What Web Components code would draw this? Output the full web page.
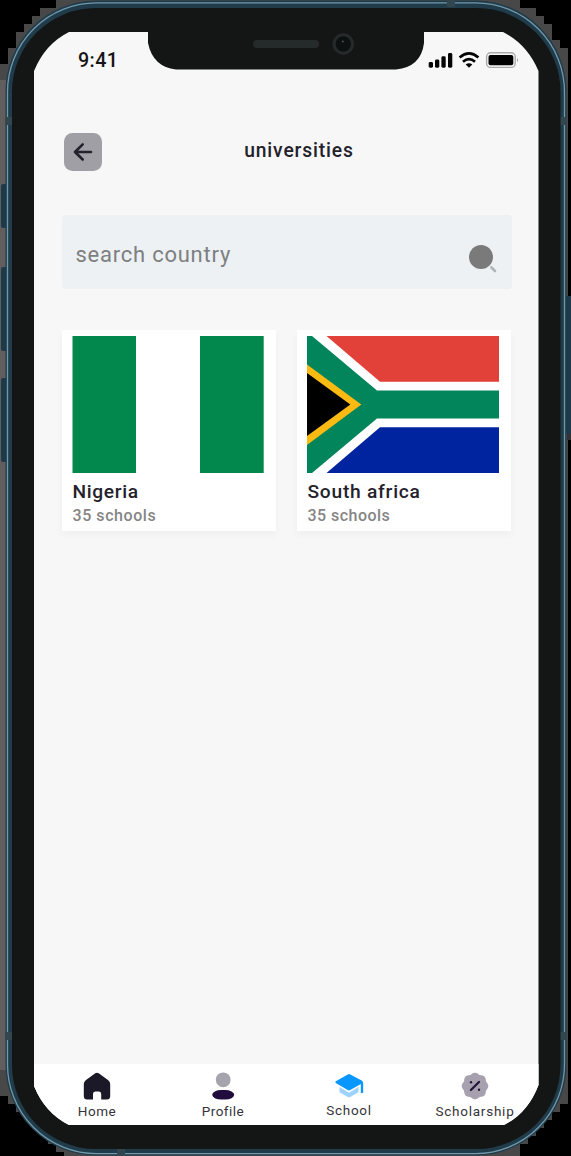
<!DOCTYPE html>
<html lang="en">
<head>
<meta charset="utf-8">
<title>universities</title>
<style>
html,body{margin:0;background:#000;overflow:hidden}
body{font-family:Roboto,"Liberation Sans",sans-serif;color:#23222b}
</style>
</head>
<body>
<phone-frame>
  <status-bar></status-bar>
  <page-header>universities</page-header>
  <search-box>search country</search-box>
  <country-grid>
    <country-card flag="ng" style="--name-spacing:.65px;--count-spacing:.57px"><span slot="name">Nigeria</span><span slot="count">35 schools</span></country-card>
    <country-card flag="za" style="--name-spacing:.75px;--count-spacing:.47px"><span slot="name">South africa</span><span slot="count">35 schools</span></country-card>
  </country-grid>
  <tab-bar>
    <tab-item icon="home" style="--ls:.55px">Home</tab-item>
    <tab-item icon="profile" style="--ls:.5px">Profile</tab-item>
    <tab-item icon="school" style="--ls:.75px;--lift:-1px">School</tab-item>
    <tab-item icon="scholarship" style="--ls:.75px">Scholarship</tab-item>
  </tab-bar>
</phone-frame>
<script>
class Base extends HTMLElement{
  connectedCallback(){
    if(this.shadowRoot)return;
    this.attachShadow({mode:'open'}).innerHTML=this.render();
  }
}
customElements.define('phone-frame',class extends Base{
  render(){return `<style>
:host{display:grid;width:571px;height:1156px;overflow:hidden}
svg,.screen{grid-area:1/1}
.screen{box-sizing:border-box;margin:32px 32px 31px 34px;width:505px;height:1093px;display:flex;flex-direction:column;background:#f7f7f7;clip-path:path("M0 39Q11 12 35 0H114V11Q119 35 142 37.5H362Q387 35 390 11V0H469Q493 12 504.5 39V1053Q494 1081 470 1093H35Q11 1081 0 1054Z")}
</style>
<svg width="571" height="1156" viewBox="0 0 571 1156">
<path fill="#484848" d="M56 0H520V8H536V16H544V24H552V40H560V48H568V1104H560V1112H552V1120H544V1128H536V1136H528V1144H520V1156H64V1152H56V1144H48V1136H40V1128H32V1120H24V1112H16V1104H8V1096H0V64H8V48H16V32H24V24H32V16H40V8H56Z"/>
<path fill="#625e5e" d="M0 80H6V1070H0Z"/>
<g fill="#1d3a4b"><rect x="1" y="184" width="8" height="44" rx="2"/><rect x="1" y="267" width="8" height="84" rx="2"/><rect x="1" y="378" width="8" height="84" rx="2"/><rect x="564" y="296" width="9" height="138" rx="1"/></g>
<path fill="#333" d="M567 434h4v6h-4z"/>
<rect x="5.5" y=".5" width="561" height="1155" rx="91" fill="#203b49"/>
<rect x="7.5" y="2.9" width="557" height="1150.7" rx="89" fill="none" stroke="#7198ab" stroke-width="1.3"/>
<path fill="#31464f" d="M5 117h7v8H5zM560 117h7v8h-7zM5 1032h7v8H5zM560 1032h7v8h-7zM447 0h8v7h-8zM117 1149h8v7h-8z"/>
<rect x="12" y="8" width="548.5" height="1141" rx="84" fill="#131615"/>
<rect x="253" y="40" width="66" height="8" rx="4" fill="#252b2a"/>
<circle cx="343.3" cy="44" r="9.2" fill="#0d1011" stroke="#252b2b" stroke-width="3"/>
<circle cx="342.8" cy="41.5" r="1" fill="#4a5353"/>
</svg>
<div class="screen"><slot></slot></div>`}
});
customElements.define('status-bar',class extends Base{
  render(){return `<style>
:host{display:flex;flex:none;height:56px;box-sizing:border-box;padding:0 20px 0 44px;align-items:center;justify-content:space-between}
b{font-weight:500;font-size:19.7px;line-height:24px;letter-spacing:.4px;color:#151515;padding-top:2px}
svg{display:block}
</style><b>9:41</b>
<svg width="91" height="20" viewBox="428 50 91 20">
<g fill="#050505"><rect x="428.7" y="62" width="4.3" height="5.7" rx="1.4"/><rect x="435" y="59.5" width="4.3" height="8.2" rx="1.4"/><rect x="441.4" y="56.3" width="4.3" height="11.4" rx="1.4"/><rect x="448" y="53" width="4.3" height="14.7" rx="1.4"/></g>
<g fill="none" stroke="#050505" stroke-width="2.6"><path d="M459.6 57.4Q469 49.4 478.4 57.4"/><path d="M463 61.7Q469 56.4 475 61.7"/></g>
<path d="M465.7 64.4Q469 61.9 472.3 64.4L469 67.7Z" fill="#050505"/>
<rect x="486.6" y="52.8" width="28.6" height="14.6" rx="4" fill="none" stroke="#aaa" stroke-width="1.4"/>
<rect x="488.5" y="55" width="24.8" height="10.3" rx="2" fill="#000"/>
<path d="M517 57.8Q518.8 60.2 517 62.6Z" fill="#777"/>
</svg>`}
});
customElements.define('page-header',class extends Base{
  render(){return `<style>
:host{display:grid;flex:none;grid-template-columns:38px 1fr;align-items:center;height:38px;margin:45px 26px 0 30px}
.back{width:38px;height:38px;border-radius:8.5px;background:#a09fa5;display:grid;place-items:center}
h1{margin:0;font-size:19.3px;line-height:22px;font-weight:500;letter-spacing:.85px;text-align:center;padding:0 17px 2px 0}
</style>
<div class="back"><svg width="38" height="38" viewBox="0 0 38 38" fill="none" stroke="#23222d" stroke-width="2.6" stroke-linecap="round" stroke-linejoin="round"><path d="M11.3 19H27M18.7 11.3L11 19L18.7 26.5"/></svg></div>
<h1><slot></slot></h1>`}
});
customElements.define('search-box',class extends Base{
  render(){return `<style>
:host{display:flex;flex:none;box-sizing:border-box;height:74px;margin:44px 27px 0 28px;padding:6px 15.5px 0 13.5px;align-items:center;justify-content:space-between;background:#edf1f4;border-radius:4px;color:#7d7f80}
span{font-size:22px;line-height:26px;letter-spacing:.76px}
svg{display:block;margin-top:5px}
</style><span><slot></slot></span>
<svg width="30" height="30" viewBox="0 0 30 30"><circle cx="14" cy="14" r="12" fill="#7a7a7a"/><path d="M24.4 24.5L28 28" stroke="#b2b4b5" stroke-width="2.6" stroke-linecap="round"/></svg>`}
});
customElements.define('country-grid',class extends Base{
  render(){return `<style>
:host{display:grid;flex:none;grid-template-columns:214px 214px;gap:21px;margin:41px 0 0 28px}
</style><slot></slot>`}
});
const FLAGS={
  ng:'<path fill="#fff" d="M0 0H192V137H0Z"/><path fill="#02874d" d="M.5 0H64V137H.5ZM128 0H191.7V137H128Z"/>',
  za:'<path fill="#fff" d="M0 0H192V137H0Z"/><path fill="#e24139" d="M19.5 0H192V45.7H73Z"/><path fill="#0023a0" d="M73 91.3H192V137H19.5Z"/><path fill="#02855a" d="M0 0H5L70 54.5H192V82.5H70L5 137H0Z"/><path fill="#fdba12" d="M0 28.5L54.3 68.5L0 109Z"/><path d="M0 37L43.3 68.5L0 100Z"/>'
};
customElements.define('country-card',class extends Base{
  render(){return `<style>
:host{display:flex;flex-direction:column;box-sizing:border-box;height:201px;padding:6px 10px 0;background:#fff;box-shadow:0 4px 8px rgba(0,0,0,.035)}
svg{display:block;flex:none}
.name{font-size:19.2px;line-height:24px;margin:7px 0 0 .5px;font-weight:500;letter-spacing:var(--name-spacing,.7px)}
.count{font-size:16px;line-height:20px;margin:2px 0 0 .5px;font-weight:500;letter-spacing:var(--count-spacing,.4px);color:#858585}
</style><svg width="192" height="137" viewBox="0 0 192 137">${FLAGS[this.getAttribute('flag')]}</svg>
<div class="name"><slot name="name"></slot></div><div class="count"><slot name="count"></slot></div>`}
});
customElements.define('tab-bar',class extends Base{
  render(){return `<style>
:host{display:grid;flex:none;grid-template-columns:repeat(4,126px);height:61px;margin-top:auto;background:#fff}
</style><slot></slot>`}
});
const scallop=Array.from({length:8},(_,i)=>{const a=i*Math.PI/4;return `<circle cx="${16+8.6*Math.cos(a)}" cy="${16+8.6*Math.sin(a)}" r="4.7"/>`}).join('');
const ICONS={
  home:'<path fill="#1b1928" d="M14.3 3.2Q16 2.1 17.7 3.2L27.3 10.2Q29.2 11.8 29.2 14V26Q29.2 29.6 25.8 29.6H20.2V24Q20.2 21.5 18 21.5H14.2Q12 21.5 12 24V29.6H6.2Q2.8 29.6 2.8 26V14Q2.8 11.8 4.7 10.2Z"/>',
  profile:'<circle cx="16.2" cy="9.8" r="7.4" fill="#a5a4ac"/><rect x="5.2" y="20" width="22" height="9.6" rx="9" ry="4.8" fill="#200c3d"/>',
  school:'<path fill="#9fd3ff" d="M6.5 17V22.2L14.8 27Q16 27.7 17.2 27L25.5 22.2V17L16 22.8Z"/><path fill="#0897ff" d="M2.8 11.2L14.8 4.4Q16 3.7 17.3 4.4L28.7 10.6Q30.2 11.6 30.2 13.5V22.5Q29 23.8 27.8 22.5V14L17.3 20Q16 20.8 14.7 20L2.8 13Q1.8 12.1 2.8 11.2Z"/>',
  scholarship:`<g fill="#a7a1af">${scallop}<circle cx="16" cy="16" r="12"/></g><path d="M11.9 20L20 12" stroke="#24163a" stroke-width="2.3" stroke-linecap="round"/><circle cx="12" cy="12.2" r="1.2" fill="#24163a"/><circle cx="20" cy="19.8" r="1.2" fill="#24163a"/>`
};
customElements.define('tab-item',class extends Base{
  render(){return `<style>
:host{display:flex;flex-direction:column;align-items:center;padding-top:6px;color:#36343b;font-size:13.5px;line-height:16px;letter-spacing:var(--ls)}
svg{display:block;flex:none}
span{margin-top:calc(1px + var(--lift,0px));white-space:nowrap}
</style><svg width="32" height="32" viewBox="0 0 32 32">${ICONS[this.getAttribute('icon')]}</svg><span><slot></slot></span>`}
});
</script>
</body>
</html>
